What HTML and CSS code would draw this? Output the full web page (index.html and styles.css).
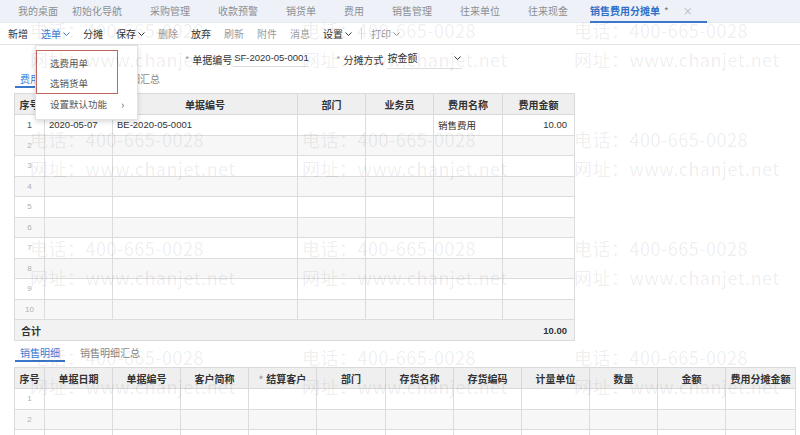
FILE: index.html
```html
<!DOCTYPE html>
<html lang="zh-CN">
<head>
    <meta charset="UTF-8">
    <title>销售费用分摊单</title>
    <link rel="stylesheet" href="styles.css">
</head>
<body>
    <div class="tabbar">
        <span class="tab tab-home">我的桌面</span>
        <span class="tab">初始化导航</span>
        <span class="tab">采购管理</span>
        <span class="tab">收款预警</span>
        <span class="tab">销货单</span>
        <span class="tab">费用</span>
        <span class="tab">销售管理</span>
        <span class="tab">往来单位</span>
        <span class="tab">往来现金</span>
        <span class="tab tab-active"><span class="tab-inner">销售费用分摊单<i class="dirty">*</i><span class="tab-close">×</span></span></span>
    </div>

    <div class="toolbar">
        <span class="tool">新增</span>
        <span class="tool tool-on">选单<svg class="chev" width="7" height="4" viewBox="0 0 7 4"><path d="M.5.5 3.5 3.5 6.5.5" fill="none" stroke="currentColor"/></svg></span>
        <span class="tool">分摊</span>
        <span class="tool">保存<svg class="chev" width="7" height="4" viewBox="0 0 7 4"><path d="M.5.5 3.5 3.5 6.5.5" fill="none" stroke="currentColor"/></svg></span>
        <span class="tool tool-off">删除</span>
        <span class="tool">放弃</span>
        <span class="tool tool-off">刷新</span>
        <span class="tool tool-off">附件</span>
        <span class="tool tool-off">消息</span>
        <span class="tool">设置<svg class="chev" width="7" height="4" viewBox="0 0 7 4"><path d="M.5.5 3.5 3.5 6.5.5" fill="none" stroke="currentColor"/></svg></span>
        <span class="tool-sep"></span>
        <span class="tool tool-off">打印<svg class="chev" width="7" height="4" viewBox="0 0 7 4"><path d="M.5.5 3.5 3.5 6.5.5" fill="none" stroke="currentColor"/></svg></span>
    </div>

    <div class="form-row">
        <div class="field">
            <span class="req">*</span>
            <span class="field-label">单据编号</span>
            <span class="field-value code">SF-2020-05-0001</span>
        </div>
        <div class="field">
            <span class="req">*</span>
            <span class="field-label">分摊方式</span>
            <span class="field-value select">按金额<svg class="chev" width="7" height="4" viewBox="0 0 7 4"><path d="M.5.5 3.5 3.5 6.5.5" fill="none" stroke="currentColor"/></svg></span>
        </div>
    </div>

    <div class="sub-tabs">
        <span class="sub-tab sub-tab-on">费用单据明细</span>
        <span class="sub-tab">费用明细汇总</span>
    </div>

    <table class="grid grid-fee">
        <colgroup>
            <col style="width:30px"><col style="width:68px"><col style="width:185px"><col style="width:68px">
            <col style="width:68px"><col style="width:69px"><col style="width:72px">
        </colgroup>
        <thead>
            <tr><th>序号</th><th>单据日期</th><th>单据编号</th><th>部门</th><th>业务员</th><th>费用名称</th><th>费用金额</th></tr>
        </thead>
        <tbody>
            <tr><td class="no no-first">1</td><td>2020-05-07</td><td>BE-2020-05-0001</td><td></td><td></td><td>销售费用</td><td class="num">10.00</td></tr>
            <tr><td class="no">2</td><td></td><td></td><td></td><td></td><td></td><td></td></tr>
            <tr><td class="no">3</td><td></td><td></td><td></td><td></td><td></td><td></td></tr>
            <tr><td class="no">4</td><td></td><td></td><td></td><td></td><td></td><td></td></tr>
            <tr><td class="no">5</td><td></td><td></td><td></td><td></td><td></td><td></td></tr>
            <tr><td class="no">6</td><td></td><td></td><td></td><td></td><td></td><td></td></tr>
            <tr><td class="no">7</td><td></td><td></td><td></td><td></td><td></td><td></td></tr>
            <tr><td class="no">8</td><td></td><td></td><td></td><td></td><td></td><td></td></tr>
            <tr><td class="no">9</td><td></td><td></td><td></td><td></td><td></td><td></td></tr>
            <tr><td class="no">10</td><td></td><td></td><td></td><td></td><td></td><td></td></tr>
        </tbody>
        <tfoot>
            <tr><td colspan="6" class="total-label">合计</td><td class="num total-value">10.00</td></tr>
        </tfoot>
    </table>

    <div class="sub-tabs sub-tabs-sale">
        <span class="sub-tab sub-tab-on">销售明细</span>
        <span class="sub-tab">销售明细汇总</span>
    </div>

    <table class="grid grid-sale">
        <colgroup>
            <col style="width:30px"><col style="width:68px"><col style="width:68px"><col style="width:68px">
            <col style="width:68px"><col style="width:69px"><col style="width:68px"><col style="width:68px">
            <col style="width:68px"><col style="width:68px"><col style="width:68px"><col style="width:70px">
        </colgroup>
        <thead>
            <tr><th>序号</th><th>单据日期</th><th>单据编号</th><th>客户简称</th><th><span class="req">*</span>结算客户</th><th>部门</th><th>存货名称</th><th>存货编码</th><th>计量单位</th><th>数量</th><th>金额</th><th>费用分摊金额</th></tr>
        </thead>
        <tbody>
            <tr><td class="no">1</td><td></td><td></td><td></td><td></td><td></td><td></td><td></td><td></td><td></td><td></td><td></td></tr>
            <tr><td class="no">2</td><td></td><td></td><td></td><td></td><td></td><td></td><td></td><td></td><td></td><td></td><td></td></tr>
            <tr><td class="no">3</td><td></td><td></td><td></td><td></td><td></td><td></td><td></td><td></td><td></td><td></td><td></td></tr>
        </tbody>
    </table>

    <!-- 选单 dropdown -->
    <div class="menu">
        <div class="menu-mark">
            <div class="menu-item">选费用单</div>
            <div class="menu-item">选销货单</div>
        </div>
        <div class="menu-item menu-sub">设置默认功能<span class="menu-arrow">›</span></div>
    </div>

    <!-- watermark -->
    <div class="watermark">
        <div class="wm"><p>电话：400-665-0028</p><p>网址：www.chanjet.net</p></div>
        <div class="wm"><p>电话：400-665-0028</p><p>网址：www.chanjet.net</p></div>
        <div class="wm"><p>电话：400-665-0028</p><p>网址：www.chanjet.net</p></div>
        <div class="wm"><p>电话：400-665-0028</p><p>网址：www.chanjet.net</p></div>
        <div class="wm"><p>电话：400-665-0028</p><p>网址：www.chanjet.net</p></div>
        <div class="wm"><p>电话：400-665-0028</p><p>网址：www.chanjet.net</p></div>
        <div class="wm"><p>电话：400-665-0028</p><p>网址：www.chanjet.net</p></div>
        <div class="wm"><p>电话：400-665-0028</p><p>网址：www.chanjet.net</p></div>
        <div class="wm"><p>电话：400-665-0028</p><p>网址：www.chanjet.net</p></div>
        <div class="wm"><p>电话：400-665-0028</p><p>网址：www.chanjet.net</p></div>
        <div class="wm"><p>电话：400-665-0028</p><p>网址：www.chanjet.net</p></div>
        <div class="wm"><p>电话：400-665-0028</p><p>网址：www.chanjet.net</p></div>
    </div>
</body>
</html>
```

FILE: styles.css
```css
* {
    margin: 0;
    padding: 0;
    box-sizing: border-box;
}

body {
    font-family: "Noto Sans CJK SC", "Liberation Sans", sans-serif;
    font-size: 10px;
    color: #333;
    background: #fff;
    width: 800px;
    height: 435px;
    overflow: hidden;
    position: relative;
}

/* top page tabs */
.tabbar {
    height: 23px;
    background: #eef2f8;
    display: flex;
    align-items: stretch;
    padding-left: 4px;
    border-bottom: 1px solid #e6eaf0;
}

.tab {
    padding: 0 14px;
    line-height: 22px;
    color: #8a8f96;
    white-space: nowrap;
}

.tab-home {
    padding-right: 0;
}

.tab-active {
    padding: 0 0 0 8px;
    color: #2f6fc8;
    font-weight: bold;
}

.tab-inner {
    display: inline-block;
    height: 23px;
    border-bottom: 2px solid #3b78c9;
    padding-right: 14px;
}

.dirty {
    font-style: normal;
    font-weight: normal;
    color: #777;
    margin-left: 4px;
}

.tab-close {
    color: #b0b4ba;
    font-weight: normal;
    margin-left: 14px;
}

/* toolbar */
.toolbar {
    height: 22px;
    display: flex;
    align-items: center;
    gap: 13px;
    padding-left: 8px;
    border-bottom: 1px solid #e3e3e3;
}

.tool {
    color: #333;
    white-space: nowrap;
    display: flex;
    align-items: center;
}

.tool-on {
    color: #3a7bd5;
}

.tool-off {
    color: #9a9a9a;
}

.chev {
    margin-left: 2px;
    margin-top: 1px;
}

.tool-sep {
    width: 1px;
    height: 11px;
    background: #d6d6d6;
    margin: 0 -4px;
}

/* header fields */
.form-row {
    height: 26px;
    display: flex;
    align-items: center;
    padding: 2px 0 0 185px;
    gap: 27px;
}

.field {
    display: flex;
    align-items: center;
}

.req {
    color: #999;
    font-size: 9px;
    margin-right: 3px;
}

.field-label {
    color: #333;
    margin-right: 2px;
}

.field-value {
    border-bottom: 1px solid #ddd;
    padding: 1px 0 3px;
    display: flex;
    align-items: center;
    justify-content: space-between;
    white-space: nowrap;
}

.code {
    font-family: "Liberation Sans", "Noto Sans CJK SC", sans-serif;
    font-size: 9.5px;
    width: 75px;
}

.select {
    width: 75px;
    margin-left: 2px;
    padding-right: 1px;
}

/* sub tabs */
.sub-tabs {
    display: flex;
    gap: 10px;
    height: 17px;
    margin: 0 0 5px 15px;
}

.sub-tab {
    padding: 0 5px;
    line-height: 15px;
    color: #888;
}

.sub-tab-on {
    color: #3a7bd5;
    border-bottom: 2px solid #3b78c9;
}

.sub-tabs-sale {
    margin-top: 4px;
    margin-bottom: 5px;
}

/* grids */
.grid {
    border-collapse: collapse;
    table-layout: fixed;
    margin-left: 14px;
    font-family: "Liberation Sans", "Noto Sans CJK SC", sans-serif;
    font-size: 9.5px;
}

.grid-fee {
    width: 560px;
}

.grid-sale {
    width: 781px;
}

.grid th {
    height: 21px;
    background: #efefef;
    border: 1px solid #d9d9d9;
    font-family: "Noto Sans CJK SC", sans-serif;
    font-size: 10px;
    font-weight: bold;
    color: #333;
    white-space: nowrap;
    overflow: hidden;
}

.grid td {
    height: 20.5px;
    border: 1px solid #dcdcdc;
    padding: 0 4px;
    color: #333;
    white-space: nowrap;
    overflow: hidden;
}

.grid tbody tr:nth-child(even) td {
    background: #f7f7f7;
}

.grid td.no {
    text-align: center;
    color: #b0b0b0;
    font-size: 8px;
    padding: 0;
}

.grid td.no-first {
    color: #555;
    font-size: 9px;
}

.grid td.num {
    text-align: right;
    padding-right: 7px;
}

.grid tfoot td {
    background: #f2f2f2;
    height: 21px;
    font-weight: bold;
    border-left: none;
    border-right: none;
}

.grid tfoot td.total-label {
    border-left: 1px solid #dcdcdc;
    padding-left: 6px;
    font-family: "Noto Sans CJK SC", sans-serif;
    font-size: 10px;
}

.grid tfoot td.total-value {
    border-right: 1px solid #dcdcdc;
}

/* dropdown of 选单 */
.menu {
    position: absolute;
    left: 35px;
    top: 45px;
    width: 103px;
    height: 75px;
    background: #fff;
    border: 1px solid #e2e2e2;
    box-shadow: 0 2px 5px rgba(0, 0, 0, 0.15);
    padding-top: 4px;
    color: #555;
    font-size: 9.5px;
}

.menu-mark {
    border: 1px solid #c0675f;
    width: 82px;
    padding-top: 2px;
}

.menu-item {
    height: 20px;
    line-height: 20px;
    padding-left: 13px;
    white-space: nowrap;
}

.menu-sub {
    padding-left: 14px;
    display: flex;
}

.menu-arrow {
    margin-left: 14px;
    font-size: 11px;
    color: #666;
}

/* watermark over the page */
.watermark {
    position: absolute;
    left: 30px;
    top: 16px;
    display: grid;
    grid-template-columns: repeat(3, 272px);
    grid-auto-rows: 109px;
    pointer-events: none;
}

.wm p {
    line-height: 29px;
    font-family: "Noto Sans CJK SC", sans-serif;
    font-size: 18px;
    letter-spacing: 0.5px;
    color: rgba(0, 0, 0, 0.075);
    white-space: nowrap;
}
```
